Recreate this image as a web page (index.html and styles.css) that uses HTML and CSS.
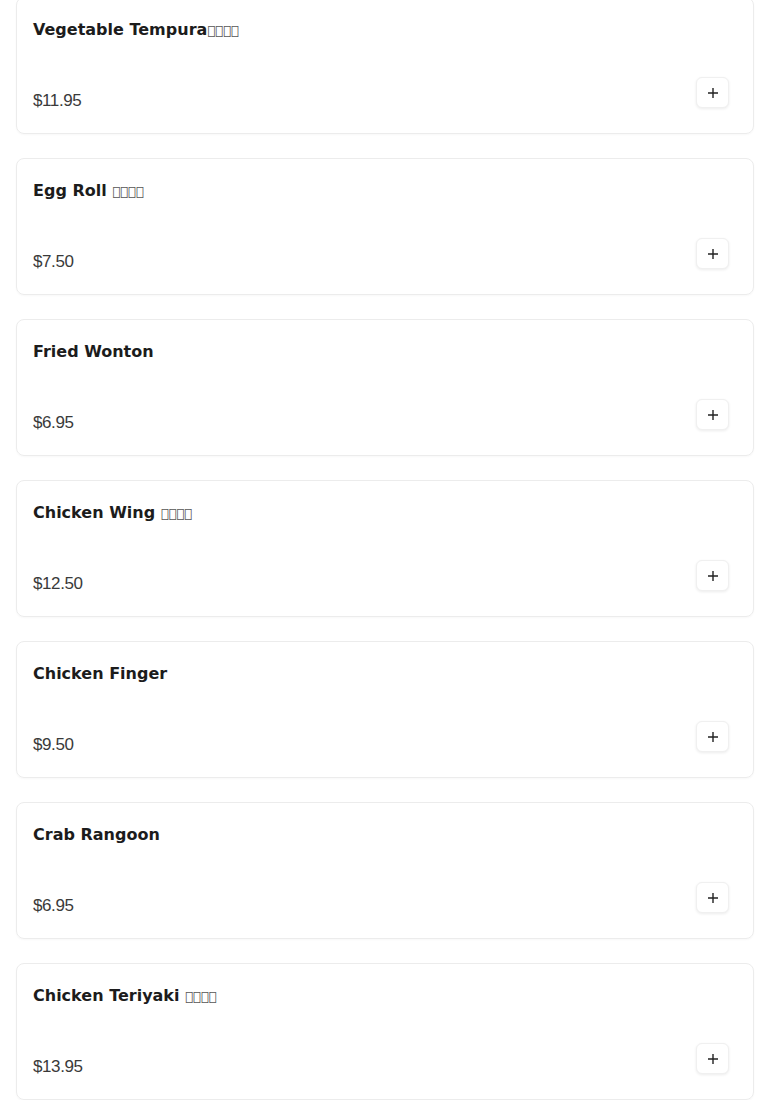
FILE: index.html
```html
<!DOCTYPE html>
<html>
<head>
    <title>Menu</title>
    <link rel="stylesheet" href="styles.css">
</head>
<body>
    <div class="menu-list">
        <div class="menu-item">
            <h3 class="item-name">Vegetable Tempura<span class="tofu">&#xE001;&#xE002;&#xE003;&#xE004;</span></h3>
            <div class="item-footer">
                <span class="item-price">$11.95</span>
                <button class="add-btn" aria-label="Add"><svg width="12" height="12" viewBox="0 0 12 12"><path d="M6 1v10M1 6h10" stroke="#222" stroke-width="1.4"/></svg></button>
            </div>
        </div>
        <div class="menu-item">
            <h3 class="item-name">Egg Roll <span class="tofu">&#xE001;&#xE002;&#xE003;&#xE004;</span></h3>
            <div class="item-footer">
                <span class="item-price">$7.50</span>
                <button class="add-btn" aria-label="Add"><svg width="12" height="12" viewBox="0 0 12 12"><path d="M6 1v10M1 6h10" stroke="#222" stroke-width="1.4"/></svg></button>
            </div>
        </div>
        <div class="menu-item">
            <h3 class="item-name">Fried Wonton</h3>
            <div class="item-footer">
                <span class="item-price">$6.95</span>
                <button class="add-btn" aria-label="Add"><svg width="12" height="12" viewBox="0 0 12 12"><path d="M6 1v10M1 6h10" stroke="#222" stroke-width="1.4"/></svg></button>
            </div>
        </div>
        <div class="menu-item">
            <h3 class="item-name">Chicken Wing <span class="tofu">&#xE001;&#xE002;&#xE003;&#xE004;</span></h3>
            <div class="item-footer">
                <span class="item-price">$12.50</span>
                <button class="add-btn" aria-label="Add"><svg width="12" height="12" viewBox="0 0 12 12"><path d="M6 1v10M1 6h10" stroke="#222" stroke-width="1.4"/></svg></button>
            </div>
        </div>
        <div class="menu-item">
            <h3 class="item-name">Chicken Finger</h3>
            <div class="item-footer">
                <span class="item-price">$9.50</span>
                <button class="add-btn" aria-label="Add"><svg width="12" height="12" viewBox="0 0 12 12"><path d="M6 1v10M1 6h10" stroke="#222" stroke-width="1.4"/></svg></button>
            </div>
        </div>
        <div class="menu-item">
            <h3 class="item-name">Crab Rangoon</h3>
            <div class="item-footer">
                <span class="item-price">$6.95</span>
                <button class="add-btn" aria-label="Add"><svg width="12" height="12" viewBox="0 0 12 12"><path d="M6 1v10M1 6h10" stroke="#222" stroke-width="1.4"/></svg></button>
            </div>
        </div>
        <div class="menu-item">
            <h3 class="item-name">Chicken Teriyaki <span class="tofu">&#xE001;&#xE002;&#xE003;&#xE004;</span></h3>
            <div class="item-footer">
                <span class="item-price">$13.95</span>
                <button class="add-btn" aria-label="Add"><svg width="12" height="12" viewBox="0 0 12 12"><path d="M6 1v10M1 6h10" stroke="#222" stroke-width="1.4"/></svg></button>
            </div>
        </div>
    </div>
</body>
</html>
```

FILE: styles.css
```css
body {
    font-family: "DejaVu Sans", sans-serif;
    margin: 0;
    padding: 0 16px;
    background: #fff;
    color: #1a1a1a;
}

.menu-list {
    margin-top: -3px; /* page is scrolled a little */
    display: flex;
    flex-direction: column;
    gap: 24px;
}

.menu-item {
    border: 1px solid #ececec;
    border-radius: 8px;
    padding: 17px 16px 16px;
    box-shadow: 0 1px 2px rgba(0, 0, 0, 0.03);
}

.item-name {
    margin: 0;
    height: 30px;
    font-size: 16px;
    font-weight: bold;
    line-height: 30px;
    color: #1c1c1c;
}

.tofu {
    display: inline-block;
    font-weight: normal;
    font-size: 13px;
    line-height: 1;
    color: #555;
}

.item-footer {
    margin-top: 32px;
    display: flex;
    justify-content: space-between;
    align-items: flex-end;
}

.item-price {
    font-family: "Liberation Sans", Arial, sans-serif;
    font-size: 17px;
    letter-spacing: -0.4px;
    line-height: 32px;
    color: #3a3a3a;
}

.add-btn {
    width: 33px;
    height: 31px;
    margin: 0 8px 9px 0;
    padding: 0;
    border: 1px solid #f0f0f0;
    border-radius: 6px;
    background: #fff;
    box-shadow: 0 1px 3px rgba(0, 0, 0, 0.08);
    display: flex;
    align-items: center;
    justify-content: center;
    cursor: pointer;
}
```
